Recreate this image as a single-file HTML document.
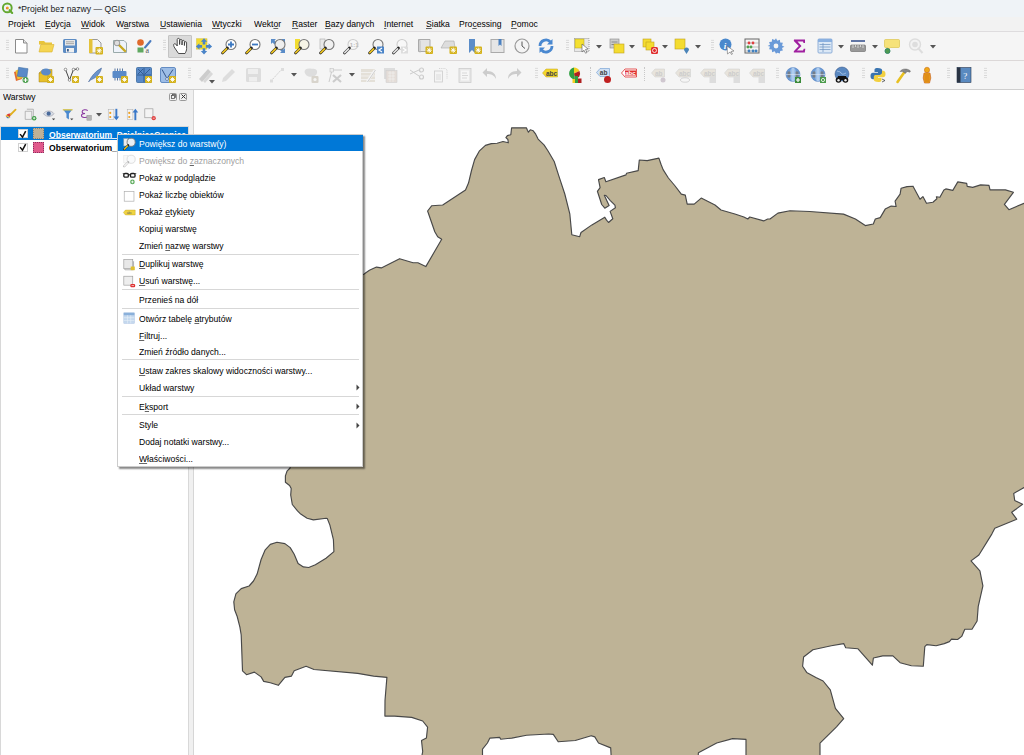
<!DOCTYPE html>
<html><head><meta charset="utf-8">
<style>
*{margin:0;padding:0;box-sizing:border-box}
html,body{width:1024px;height:755px;overflow:hidden;background:#fff;font-family:"Liberation Sans",sans-serif;font-size:8.6px;color:#000}
.abs{position:absolute}
.ic{position:absolute;overflow:visible}
.grip{position:absolute;width:3px;background-image:radial-gradient(circle,#d2d2d2 0.55px,transparent 0.75px);background-size:2px 2.4px}
.t{position:absolute;white-space:nowrap;line-height:10px;font-size:9.5px;transform:scaleX(.905);transform-origin:0 0}
.mb{top:19px;color:#000}
.mt{position:absolute;white-space:nowrap;line-height:10px;font-size:9.5px;transform:scaleX(.905);transform-origin:0 0}
u{text-decoration:underline;text-underline-offset:1px;text-decoration-thickness:0.8px;text-decoration-color:rgba(0,0,0,.6)}
</style></head><body>
<div class="abs" style="left:0;top:0;width:1024px;height:16.7px;background:#eff3f7"></div>
<svg class="ic" style="left:0;top:0;width:20px;height:18px" viewBox="0 0 20 18"><circle cx="7.3" cy="7.9" r="4.4" fill="none" stroke="#62a830" stroke-width="1.9"/><path d="M9.6 10.2L12.2 12.9" stroke="#62a830" stroke-width="2.1" stroke-linecap="round"/><circle cx="7.4" cy="8.1" r="1.5" fill="#f0b020"/><circle cx="6.9" cy="8.2" r="0.7" fill="#e05050"/></svg>
<div class="t" style="left:17.6px;top:3.6px;color:#1a1a1a">*Projekt bez nazwy — QGIS</div>
<div class="abs" style="left:0;top:16.7px;width:1024px;height:15.3px;background:#f2f2f2;border-bottom:1px solid #dedcde"></div>
<div class="t mb" style="left:7.5px">Pro<u>j</u>ekt</div>
<div class="t mb" style="left:45.4px"><u>E</u>dycja</div>
<div class="t mb" style="left:80.6px"><u>W</u>idok</div>
<div class="t mb" style="left:116.3px">W<u>a</u>rstwa</div>
<div class="t mb" style="left:159.75px"><u>U</u>stawienia</div>
<div class="t mb" style="left:211.9px"><u>W</u>tyczki</div>
<div class="t mb" style="left:253.7px">Wekt<u>o</u>r</div>
<div class="t mb" style="left:291.6px"><u>R</u>aster</div>
<div class="t mb" style="left:325.3px"><u>B</u>azy danych</div>
<div class="t mb" style="left:384px"><u>I</u>nternet</div>
<div class="t mb" style="left:425.5px"><u>S</u>iatka</div>
<div class="t mb" style="left:458.8px">Pro<u>c</u>essing</div>
<div class="t mb" style="left:511.2px"><u>P</u>omoc</div>
<div class="abs" style="left:0;top:32px;width:1024px;height:29px;background:#f5f5f5;border-bottom:1px solid #dcd8d8"></div>
<div class="abs" style="left:0;top:61px;width:1024px;height:28.5px;background:#f5f5f5;border-bottom:1px solid #cfcfcf"></div>
<div class="abs" style="left:0;top:89.5px;width:193px;height:666px;background:#f0f0f0"></div>
<div class="t" style="left:3.1px;top:91.9px">Warstwy</div>
<div class="abs" style="left:169px;top:92.7px;width:7.5px;height:8px;border:1px solid #999;border-radius:1.5px"></div>
<svg class="ic" style="left:170.5px;top:94.2px;width:5px;height:5px" viewBox="0 0 5 5"><rect x="1.5" y="0.5" width="3" height="3" fill="none" stroke="#555" stroke-width="0.8"/><rect x="0.5" y="1.5" width="3" height="3" fill="#f0f0f0" stroke="#555" stroke-width="0.8"/></svg>
<div class="abs" style="left:179.3px;top:92.7px;width:7.5px;height:8px;border:1px solid #999;border-radius:1.5px"></div>
<svg class="ic" style="left:180.8px;top:94.2px;width:5px;height:5px" viewBox="0 0 5 5"><path d="M0.5 0.5L4.5 4.5M4.5 0.5L0.5 4.5" stroke="#333" stroke-width="1"/></svg>
<div class="abs" style="left:0;top:126.2px;width:189px;height:630px;background:#fff;border:1px solid #d8d8d8"></div>
<div class="abs" style="left:1px;top:126.9px;width:187px;height:13.2px;background:#0078d7"></div>
<div class="abs" style="left:18px;top:129.3px;width:9.8px;height:9.2px;background:#fff;border:1px solid #d0d0d0"></div>
<svg class="ic" style="left:18px;top:129px;width:10px;height:10px" viewBox="0 0 10 10"><path d="M2.1 5.1L4.5 8.1L7.7 2.2" stroke="#111" stroke-width="1.5" fill="none" stroke-linejoin="miter"/></svg>
<div class="abs" style="left:32.7px;top:128.3px;width:11.3px;height:11.2px;background:#bdb197;border:1px dotted #8a8070"></div>
<div class="t" style="left:49px;top:130px;font-weight:bold;color:#fff;text-decoration:underline;text-decoration-color:rgba(255,255,255,.8);text-underline-offset:0px">Obserwatorium_DzielniceGranice</div>
<div class="abs" style="left:18px;top:142.5px;width:9.8px;height:9.7px;background:#fff;border:1px solid #d0d0d0"></div>
<svg class="ic" style="left:18px;top:142.3px;width:10px;height:10px" viewBox="0 0 10 10"><path d="M2.1 5.1L4.5 8.1L7.7 2.2" stroke="#111" stroke-width="1.5" fill="none" stroke-linejoin="miter"/></svg>
<div class="abs" style="left:32.7px;top:141.5px;width:11.3px;height:11.7px;background:#e05a8c;border:1px dotted #8a3060"></div>
<div class="t" style="left:49px;top:143.3px;font-weight:bold;color:#000">Obserwatorium_DzielniceGranice</div>
<div class="abs" style="left:189px;top:89.5px;width:4px;height:666px;background:#f0f0f0"></div>
<div class="abs" style="left:193px;top:89.5px;width:831px;height:666px;background:#fff;border-left:1px solid #d6d6d6"></div>
<svg style="position:absolute;left:193px;top:89.5px" width="831" height="666" viewBox="193 89.5 831 666">
<path d="M363.8 273.8 L369.4 269.8 L376.5 266.6 L381.3 267.4 L399.6 258.2 L413.1 262.2 L417.9 262.3 L425.8 266.1 L441.7 238.8 L437.7 236.2 L434.8 231.2 L427.6 210.5 L431.8 205.2 L442.7 204.5 L465.5 189.5 L468.5 182.6 L471.5 170 L474.6 159.1 L479.5 150.3 L485.4 144.9 L491.3 143.1 L497.1 142.7 L503 141 L508.3 142.3 L507.9 139 L505.9 137.1 L507.4 135.1 L510.8 134.2 L511.6 127.3 L526.4 127.3 L527.4 129.8 L528.4 131.7 L530.3 129.3 L533.2 130.3 L535.7 133.7 L538.1 138.6 L544 144.4 L547.9 150.3 L554.2 161 L558.9 175.6 L564.8 193.5 L569.8 213.3 L571.8 234.2 L579.7 236.2 L581 232 L591.9 224.4 L604.8 216.7 L606.4 219.4 L608.5 222 L612.8 218.3 L610.1 210.9 L615.4 207.2 L614.9 204.6 L610.1 199.8 L606 195 L604.3 194.8 L609.1 205.1 L604.8 207.7 L601.7 204 L597.4 190.8 L600.1 187.1 L598.5 179.1 L604.3 177 L605.9 181.3 L626 174.4 L626.5 172.8 L638.2 170.1 L639.3 159.5 L647.2 160.1 L658.9 157.6 L661 163.8 L663.1 169.1 L668.4 177.5 L674.7 185 L681.3 193.6 L685.3 194.6 L687.2 203.6 L694.2 203.6 L701.2 197.6 L715 204.5 L721 209.5 L734.9 213.5 L743.9 216.5 L747.8 218.5 L749.8 216.5 L763.7 220.4 L767.7 218.5 L770 218.5 L777.9 212.6 L789.9 210.2 L809.7 211 L843.5 213.6 L855.4 218.5 L865.3 225.1 L873.3 223.5 L875.3 218.5 L880.2 217.1 L885.2 208.6 L891.2 205.6 L896.1 206 L895.1 200.6 L900.1 193.7 L901.1 187.7 L907 186.1 L913 185.7 L920 198.7 L922.9 196.1 L926.5 202.8 L932.9 201.8 L936.9 198.3 L936.4 196.3 L939.9 196.8 L943.9 189.4 L945.8 188.4 L952.8 189.9 L957.8 181.4 L966.7 182.9 L967.2 185.9 L972.7 186.9 L980.6 184.4 L989 184.9 L990 189.4 L1005.4 189.4 L1013.4 191.8 L1004.4 203.8 L1008.9 209.2 L1024 202.8 L1040 200 L1040 490 L1024 487 L1013.7 492.9 L1014.7 499.9 L1022.6 503.8 L1011.7 511.8 L1016.7 518.7 L994.8 527.7 L991.8 533.6 L978.9 554.5 L971 560.4 L979.9 570.4 L982.9 585.3 L978.2 606.2 L977.1 620.5 L972 628.7 L964.8 628.7 L961.7 635.9 L957.6 639 L951.5 638.6 L949.4 641.1 L944.3 643.1 L936.1 645.2 L926.8 644.1 L924.8 646.2 L923.3 665.7 L911.4 665.3 L900.1 662.2 L892.9 655.4 L882.7 655.4 L873.4 657.5 L872.4 664.7 L858 648.3 L845.7 647.2 L843.7 643.1 L831.3 645.2 L812.9 649.3 L803.6 656.5 L802.6 665.7 L806.7 671.9 L815.9 677 L823.1 680.5 L830.3 689.3 L835.4 707.8 L843.7 718.1 L836.5 726.3 L820 742.7 L820 770 L746 770 L746 738.9 L732.6 738.1 L716.7 742.5 L698.4 752.3 L697.2 770 L611.9 770 L610.7 747.4 L598.5 742.5 L594.8 736.4 L591.2 735.2 L575.3 740 L558.2 741.3 L553.3 733.9 L548.5 733.5 L526.5 734.7 L511.8 737.6 L500.8 738.8 L499.6 736.9 L489.9 737.6 L487.4 742.5 L482.5 748.6 L482.5 770 L419 770 L422.7 751 L421.5 740 L426.4 737.6 L427.6 726.6 L422.7 720.5 L411.7 716.9 L394.6 715.6 L384.9 715.6 L385 700 L386.9 676.9 L373.6 675.6 L357.7 672.9 L314 669 L306.1 665.8 L294.2 670.3 L291.5 675.6 L284.9 676.9 L278.3 684.8 L270.3 682.2 L263.7 680.9 L261.1 676.4 L254.4 671.6 L246.5 674.2 L242.5 670.3 L241.2 634.5 L239.9 626.6 L237.2 616 L234.6 609.3 L233.8 601.4 L235.9 593.4 L241.2 588.1 L249.1 585.5 L253.5 580.5 L257.1 573.6 L261.1 559 L265 549.7 L270.3 543.9 L277 541.8 L284.9 543.1 L290.2 547.1 L294.2 553.7 L298.1 563 L303.4 566.4 L308.7 567 L315.4 564.3 L326 557.7 L333.9 551.1 L333.4 539.1 L329.9 524.6 L327.3 518 L326.2 517.8 L313.4 519.4 L307.1 517.8 L300.7 513.6 L297.5 510.4 L292.3 504 L290.7 494.5 L291.2 488.1 L289.6 485 L285.4 481.8 L285.4 475.4 L287 470.7 L290.1 467.5 L292 440 L300 300 L330 285 Z" fill="#beb396" stroke="#484848" stroke-width="1.15" stroke-linejoin="round"/>
</svg>
<div class="abs" style="left:168px;top:35px;width:24px;height:23px;background:#dadada;border:1px solid #c4c4c4;border-radius:1px"></div>
<svg class="ic" style="left:13px;top:37.5px;width:16px;height:16px" viewBox="0 0 16 16"><path d="M2.5 1.5h8l3.5 3.5v10h-11.5z" fill="#fff" stroke="#8a8a8a"/><path d="M10.5 1.5v3.5h3.5" fill="#e6e6e6" stroke="#8a8a8a"/></svg>
<svg class="ic" style="left:37.6px;top:37.5px;width:16px;height:16px" viewBox="0 0 16 16"><path d="M1 3h5l1.5 1.5h6.5v2h-13z" fill="#e8c43a"/><path d="M1 14l1.8-7.5h13.2l-2 7.5z" fill="#f5d552" stroke="#d9b12c" stroke-width="0.6"/></svg>
<svg class="ic" style="left:62.3px;top:37.5px;width:16px;height:16px" viewBox="0 0 16 16"><rect x="1" y="1" width="14" height="14" rx="1.5" fill="#5d8cc4"/><rect x="3" y="2" width="10" height="5.5" fill="#e8e8e8"/><path d="M4 3.8h8M4 5.6h8" stroke="#999" stroke-width="0.8"/><rect x="4" y="10" width="8" height="4.5" fill="#f0f0f0"/><rect x="5" y="11" width="1.8" height="2.5" fill="#3a5c8a"/></svg>
<svg class="ic" style="left:87px;top:37.5px;width:16px;height:16px" viewBox="0 0 16 16"><path d="M2.5 1.5h8l3.5 3.5v10h-11.5z" fill="#f4f4f4" stroke="#999"/><rect x="2" y="1" width="3.5" height="14" fill="#e4c23a"/><rect x="8.5" y="9" width="7.5" height="7.5" rx="1" fill="#d4b21c"/><path d="M12.25 10.2v5.1M9.7 12.75h5.1M10.3 10.8l3.9 3.9M14.2 10.8l-3.9 3.9" stroke="#fff" stroke-width="0.9"/></svg>
<svg class="ic" style="left:112px;top:37.5px;width:16px;height:16px" viewBox="0 0 16 16"><path d="M1.5 2.5h10.5l2.5 2.5v9.5h-13z" fill="#eef3fa" stroke="#9aa"/><path d="M5 5l8 8" stroke="#c8a820" stroke-width="2.4" stroke-linecap="round"/><circle cx="5" cy="5" r="2.8" fill="#ddd" stroke="#888" stroke-width="0.8"/></svg>
<svg class="ic" style="left:135.5px;top:37.5px;width:16px;height:16px" viewBox="0 0 16 16"><circle cx="4.5" cy="4.5" r="3.3" fill="#e06a2c"/><path d="M9 9.5 L14.5 3" stroke="#4a7cc0" stroke-width="2" stroke-linecap="round"/><rect x="1.5" y="9.5" width="6" height="5" fill="#5fa860"/><text x="9.5" y="15" font-size="8" fill="#555" font-family="Liberation Serif">a</text></svg>
<svg class="ic" style="left:172px;top:37.5px;width:16px;height:16px" viewBox="0 0 16 16"><path d="M6.5 15.5L2.8 10C1.8 8.5 1 6.5 2.3 5.8C3.2 5.3 4.2 6.3 5.2 8L5.2 1.5C5.2 0 7.6 0 7.6 1.5L7.6 6.5L7.8 2.5C7.8 1 10 1 10 2.5L10 7L10.2 3.5C10.2 2 12.4 2 12.4 3.5L12.4 7.5L12.6 4.7C12.6 3.3 14.6 3.3 14.6 4.7L14.6 10.5C14.6 12.5 13.8 14 13 15.5Z" fill="#fff" stroke="#3a3a3a" stroke-width="0.9" stroke-linejoin="round"/></svg>
<svg class="ic" style="left:196px;top:37.5px;width:16px;height:16px" viewBox="0 0 16 16"><rect x="0.7" y="0.8" width="10.3" height="10.3" fill="#f2dc30" stroke="#d0b820" stroke-width="0.5"/><g fill="#4a84c8"><path d="M8 0.3L11.2 3.8H9.3V6.5H6.7V3.8H4.8Z"/><path d="M8 0.3L11.2 3.8H9.3V6.5H6.7V3.8H4.8Z" transform="rotate(90 8 8.4)"/><path d="M8 0.3L11.2 3.8H9.3V6.5H6.7V3.8H4.8Z" transform="rotate(180 8 8.4)"/><path d="M8 0.3L11.2 3.8H9.3V6.5H6.7V3.8H4.8Z" transform="rotate(270 8 8.4)"/></g></svg>
<svg class="ic" style="left:220.5px;top:37.5px;width:16px;height:16px" viewBox="0 0 16 16"><circle cx="10" cy="6.5" r="5" fill="#fff" stroke="#777" stroke-width="1.1"/><path d="M6.5 10 L1.5 15" stroke="#222" stroke-width="2.6" stroke-linecap="round"/><path d="M5.5 11 L1.8 14.7" stroke="#e8c020" stroke-width="1.8" stroke-linecap="round"/><path d="M7 6.5h6M10 3.5v6" stroke="#3c78c0" stroke-width="1.8"/></svg>
<svg class="ic" style="left:244.5px;top:37.5px;width:16px;height:16px" viewBox="0 0 16 16"><circle cx="10" cy="6.5" r="5" fill="#fff" stroke="#777" stroke-width="1.1"/><path d="M6.5 10 L1.5 15" stroke="#222" stroke-width="2.6" stroke-linecap="round"/><path d="M5.5 11 L1.8 14.7" stroke="#e8c020" stroke-width="1.8" stroke-linecap="round"/><path d="M7 6.5h6" stroke="#3c78c0" stroke-width="1.8"/></svg>
<svg class="ic" style="left:269.5px;top:37.5px;width:16px;height:16px" viewBox="0 0 16 16"><path d="M1 1h5l-1.5 1.5 2 2-2 2-2-2L1 6zM15 1v5l-1.5-1.5-2 2-2-2 2-2L10 1zM15 15h-5l1.5-1.5-2-2 2-2 2 2L15 10z" fill="#5a8cc8"/><circle cx="10" cy="6.5" r="5" fill="#eee" stroke="#777" stroke-width="1.1"/><path d="M6.5 10 L1.5 15" stroke="#222" stroke-width="2.6" stroke-linecap="round"/><path d="M5.5 11 L1.8 14.7" stroke="#e8c020" stroke-width="1.8" stroke-linecap="round"/></svg>
<svg class="ic" style="left:294px;top:37.5px;width:16px;height:16px" viewBox="0 0 16 16"><rect x="1" y="1" width="5" height="10" fill="#f2dc30"/><circle cx="10" cy="6.5" r="5" fill="#f6f4e6" stroke="#777" stroke-width="1.1"/><path d="M6.5 10 L1.5 15" stroke="#222" stroke-width="2.6" stroke-linecap="round"/><path d="M5.5 11 L1.8 14.7" stroke="#e8c020" stroke-width="1.8" stroke-linecap="round"/></svg>
<svg class="ic" style="left:318.5px;top:37.5px;width:16px;height:16px" viewBox="0 0 16 16"><rect x="1" y="1" width="5" height="10" fill="#e8e8e8" stroke="#aaa" stroke-width="0.6"/><circle cx="10" cy="6.5" r="5" fill="#f0f0f0" stroke="#777" stroke-width="1.1"/><path d="M6.5 10 L1.5 15" stroke="#222" stroke-width="2.6" stroke-linecap="round"/><path d="M5.5 11 L1.8 14.7" stroke="#e8c020" stroke-width="1.8" stroke-linecap="round"/></svg>
<svg class="ic" style="left:342.5px;top:37.5px;width:16px;height:16px" viewBox="0 0 16 16"><circle cx="10" cy="6.5" r="5" fill="#f6f6f6" stroke="#ccc" stroke-width="1.1"/><path d="M6.5 10 L1.5 15" stroke="#222" stroke-width="2.6" stroke-linecap="round"/><path d="M5.5 11 L1.8 14.7" stroke="#ddd" stroke-width="1.8" stroke-linecap="round"/><text x="6.8" y="9" font-size="6" fill="#bbb" font-family="Liberation Sans" font-weight="bold">1:1</text></svg>
<svg class="ic" style="left:367.5px;top:37.5px;width:16px;height:16px" viewBox="0 0 16 16"><circle cx="10" cy="6.5" r="5" fill="#f4f4f4" stroke="#777" stroke-width="1.1"/><path d="M6.5 10 L1.5 15" stroke="#222" stroke-width="2.6" stroke-linecap="round"/><path d="M5.5 11 L1.8 14.7" stroke="#e8c020" stroke-width="1.8" stroke-linecap="round"/><rect x="9" y="8.5" width="7" height="7" fill="#4a84c8"/><path d="M14 10l-3 2 3 2" stroke="#fff" stroke-width="1.2" fill="none"/></svg>
<svg class="ic" style="left:391.5px;top:37.5px;width:16px;height:16px" viewBox="0 0 16 16"><circle cx="10" cy="6.5" r="5" fill="#f8f8f8" stroke="#ccc" stroke-width="1.1"/><path d="M6.5 10 L1.5 15" stroke="#222" stroke-width="2.6" stroke-linecap="round"/><path d="M5.5 11 L1.8 14.7" stroke="#ddd" stroke-width="1.8" stroke-linecap="round"/><rect x="9" y="8.5" width="7" height="7" fill="#ddd"/><path d="M11 10l3 2-3 2" stroke="#fff" stroke-width="1.2" fill="none"/></svg>
<svg class="ic" style="left:416.5px;top:37.5px;width:16px;height:16px" viewBox="0 0 16 16"><path d="M1.5 1.5h11.5v12h-11.5z" fill="#e4e4e4" stroke="#aaa"/><path d="M1.5 1.5l1.5 1v12" stroke="#bbb" fill="none"/><rect x="8.5" y="8.5" width="7.5" height="7.5" rx="1" fill="#d4b21c"/><path d="M12.25 9.7v5.1M9.7 12.25h5.1M10.3 10.3l3.9 3.9M14.2 10.3l-3.9 3.9" stroke="#fff" stroke-width="0.9"/></svg>
<svg class="ic" style="left:440.5px;top:37.5px;width:16px;height:16px" viewBox="0 0 16 16"><path d="M4 3h9l1 7h-14z" fill="#ddd" stroke="#aaa" stroke-width="0.6"/><rect x="8.5" y="8.5" width="7.5" height="7.5" rx="1" fill="#d4b21c"/><path d="M12.25 9.7v5.1M9.7 12.25h5.1M10.3 10.3l3.9 3.9M14.2 10.3l-3.9 3.9" stroke="#fff" stroke-width="0.9"/></svg>
<svg class="ic" style="left:466px;top:37.5px;width:16px;height:16px" viewBox="0 0 16 16"><path d="M3 1h6v14l-3-3-3 3z" fill="#5a8cc8"/><rect x="8.5" y="8.5" width="7.5" height="7.5" rx="1" fill="#d4b21c"/><path d="M12.25 9.7v5.1M9.7 12.25h5.1M10.3 10.3l3.9 3.9M14.2 10.3l-3.9 3.9" stroke="#fff" stroke-width="0.9"/></svg>
<svg class="ic" style="left:490px;top:37.5px;width:16px;height:16px" viewBox="0 0 16 16"><rect x="1" y="1.5" width="13" height="13" fill="#e6e6e6" stroke="#aaa"/><path d="M8.5 1v7l1.5-1.5 1.5 1.5v-7z" fill="#4a80c0"/></svg>
<svg class="ic" style="left:513.5px;top:37.5px;width:16px;height:16px" viewBox="0 0 16 16"><circle cx="8" cy="8" r="7" fill="#f4f4f4" stroke="#999" stroke-width="1.2"/><path d="M8 3.5v4.5l3 2.5" stroke="#555" stroke-width="1" fill="none"/></svg>
<svg class="ic" style="left:538px;top:37.5px;width:16px;height:16px" viewBox="0 0 16 16"><path d="M2 8a6 6 0 0 1 10.5-4" stroke="#4a88d0" stroke-width="2.8" fill="none"/><path d="M14.5 1v5.5h-5.5z" fill="#4a88d0"/><path d="M14 8a6 6 0 0 1-10.5 4" stroke="#4a88d0" stroke-width="2.8" fill="none"/><path d="M1.5 15v-5.5h5.5z" fill="#4a88d0"/></svg>
<svg class="ic" style="left:574px;top:37.5px;width:16px;height:16px" viewBox="0 0 16 16"><rect x="0.5" y="0.5" width="14.5" height="13" fill="#e8e8e8" stroke="#777" stroke-width="0.7" stroke-dasharray="1,1"/><rect x="1" y="1" width="9" height="9" fill="#f4e030" stroke="#b0a020" stroke-width="0.5"/><path d="M8 6l6 5-2.5.5 1.5 3-1.5.7-1.5-3L8 14z" fill="#fff" stroke="#555" stroke-width="0.6"/></svg>
<svg class="ic" style="left:608.5px;top:37.5px;width:16px;height:16px" viewBox="0 0 16 16"><rect x="1" y="1" width="9" height="9" fill="#ccc" stroke="#888" stroke-width="0.6"/><path d="M2.5 4h6M2.5 6.5h6" stroke="#888"/><rect x="5" y="6" width="10" height="9" fill="#f4dc30" stroke="#c0a020" stroke-width="0.6"/></svg>
<svg class="ic" style="left:641.5px;top:37.5px;width:16px;height:16px" viewBox="0 0 16 16"><rect x="1" y="1" width="8" height="8" fill="#f4dc30" stroke="#c0a020" stroke-width="0.6"/><rect x="4" y="4" width="8" height="8" fill="#f4dc30" stroke="#c0a020" stroke-width="0.6"/><rect x="9" y="9" width="7" height="7" rx="1.5" fill="#e03030"/><circle cx="12.5" cy="12.5" r="2" stroke="#fff" fill="none" stroke-width="0.8"/></svg>
<svg class="ic" style="left:674px;top:37.5px;width:16px;height:16px" viewBox="0 0 16 16"><rect x="1" y="1" width="10" height="10" fill="#f4dc30" stroke="#c0a020" stroke-width="0.6"/><path d="M12.5 16l-2.5-4a2.5 2.5 0 1 1 5 0z" fill="#4a84b8"/></svg>
<svg class="ic" style="left:719px;top:37.5px;width:16px;height:16px" viewBox="0 0 16 16"><circle cx="6.5" cy="6.5" r="6" fill="#4a88cc"/><text x="4.8" y="10.5" font-size="9" fill="#fff" font-family="Liberation Serif" font-style="italic" font-weight="bold">i</text><path d="M8 8l7 5-3 .5 1.5 2.5-1 .5-1.5-2.5-2.5 2z" fill="#fff" stroke="#666" stroke-width="0.6"/></svg>
<svg class="ic" style="left:743.5px;top:37.5px;width:16px;height:16px" viewBox="0 0 16 16"><rect x="1" y="1" width="14" height="14" fill="none" stroke="#666" stroke-width="1"/><path d="M1 5h14M1 9h14M1 13h14" stroke="#888" stroke-width="0.5"/><circle cx="5" cy="5" r="1.4" fill="#e04040"/><circle cx="9" cy="5" r="1.4" fill="#e04040"/><circle cx="4" cy="9" r="1.4" fill="#50a050"/><circle cx="7" cy="9" r="1.4" fill="#50a050"/><circle cx="5" cy="13" r="1.4" fill="#4080c0"/><circle cx="9" cy="13" r="1.4" fill="#4080c0"/><circle cx="12" cy="13" r="1.4" fill="#4080c0"/></svg>
<svg class="ic" style="left:768px;top:37.5px;width:16px;height:16px" viewBox="0 0 16 16"><path d="M8 0.3l1.3 2.4 2.6-.9.3 2.7 2.7.3-.9 2.6 2.4 1.3-2.4 1.3.9 2.6-2.7.3-.3 2.7-2.6-.9L8 15.7l-1.3-2.4-2.6.9-.3-2.7-2.7-.3.9-2.6L-.4 8l2.4-1.3-.9-2.6 2.7-.3.3-2.7 2.6.9z" fill="#6a9ad8"/><circle cx="8" cy="8" r="2.4" fill="#f4f4f4"/></svg>
<svg class="ic" style="left:792px;top:37.5px;width:16px;height:16px" viewBox="0 0 16 16"><path d="M2 1.5h11v3.5h-1.5l-.5-1.5h-5.5l4 4.5-4.5 4.5h6l.8-1.8h1.5l-.5 3.8h-11v-1.2l5-5.2-5-5.2z" fill="#a020a0"/></svg>
<svg class="ic" style="left:817px;top:37.5px;width:16px;height:16px" viewBox="0 0 16 16"><rect x="1" y="1" width="14" height="14" rx="1" fill="#dbe8f6" stroke="#7aa0d0" stroke-width="0.8"/><rect x="1" y="1" width="14" height="3" fill="#8ab0e0"/><path d="M2.5 6.5h11M2.5 9h11M2.5 11.5h11M6 5v9" stroke="#6a90c0" stroke-width="0.7"/></svg>
<svg class="ic" style="left:850px;top:37.5px;width:16px;height:16px" viewBox="0 0 16 16"><path d="M1 3h14" stroke="#223e80" stroke-width="1.4"/><rect x="0.5" y="7" width="15" height="6.5" rx="1" fill="#999" stroke="#666" stroke-width="0.6"/><path d="M3 7v3M5.5 7v2M8 7v3M10.5 7v2M13 7v3" stroke="#eee" stroke-width="0.7"/></svg>
<svg class="ic" style="left:883.5px;top:37.5px;width:16px;height:16px" viewBox="0 0 16 16"><path d="M1.5 1.5h13a1 1 0 0 1 1 1v6a1 1 0 0 1-1 1h-8l-3 3v-3h-2a1 1 0 0 1-1-1v-6a1 1 0 0 1 1-1z" fill="#f6e27a" stroke="#d8c040" stroke-width="0.6"/><circle cx="3.5" cy="13" r="2.5" fill="#4e9a50" stroke="#386"/></svg>
<svg class="ic" style="left:907.5px;top:37.5px;width:16px;height:16px" viewBox="0 0 16 16"><circle cx="7" cy="6.5" r="5.5" fill="#f2f2f2" stroke="#ddd" stroke-width="1.4"/><circle cx="7" cy="6.5" r="2.8" fill="#ddd"/><path d="M10 10l4.5 5" stroke="#ddd" stroke-width="2"/></svg>
<svg class="ic" style="left:595.5px;top:44.5px;width:6px;height:4px" viewBox="0 0 6 4"><path d="M0 0h6l-3 3.5z" fill="#555"/></svg>
<svg class="ic" style="left:628.5px;top:44.5px;width:6px;height:4px" viewBox="0 0 6 4"><path d="M0 0h6l-3 3.5z" fill="#555"/></svg>
<svg class="ic" style="left:662px;top:44.5px;width:6px;height:4px" viewBox="0 0 6 4"><path d="M0 0h6l-3 3.5z" fill="#555"/></svg>
<svg class="ic" style="left:695px;top:44.5px;width:6px;height:4px" viewBox="0 0 6 4"><path d="M0 0h6l-3 3.5z" fill="#555"/></svg>
<svg class="ic" style="left:838.4px;top:44.5px;width:6px;height:4px" viewBox="0 0 6 4"><path d="M0 0h6l-3 3.5z" fill="#555"/></svg>
<svg class="ic" style="left:871.5px;top:44.5px;width:6px;height:4px" viewBox="0 0 6 4"><path d="M0 0h6l-3 3.5z" fill="#555"/></svg>
<svg class="ic" style="left:929.5px;top:44.5px;width:6px;height:4px" viewBox="0 0 6 4"><path d="M0 0h6l-3 3.5z" fill="#555"/></svg>
<div class="grip" style="left:5.6px;top:39px;height:12px"></div>
<div class="grip" style="left:163px;top:39px;height:12px"></div>
<div class="grip" style="left:566px;top:39px;height:12px"></div>
<div class="grip" style="left:711px;top:39px;height:12px"></div>
<svg class="ic" style="left:13px;top:66.5px;width:16px;height:16px" viewBox="0 0 16 16"><path d="M1 5l6-2 2 9-6 2z" fill="#e06a30"/><path d="M2.5 3.5l6-2 2 9-6 2z" fill="#f0c030"/><rect x="5" y="1" width="9.5" height="9" fill="#5a8ac8" stroke="#3a6aa0" stroke-width="0.5" transform="rotate(8 10 5)"/><circle cx="12.5" cy="13" r="3" fill="#4ea050"/><path d="M12.5 11v4M10.5 13h4" stroke="#fff" stroke-width="1"/></svg>
<svg class="ic" style="left:38px;top:66.5px;width:16px;height:16px" viewBox="0 0 16 16"><path d="M1 6l4-3.5h9v9l-4 3.5h-9z" fill="#e8c02a" stroke="#a08020" stroke-width="0.5"/><path d="M1 6h9v9" fill="none" stroke="#a08020" stroke-width="0.5"/><ellipse cx="8" cy="5" rx="5" ry="3.5" fill="#5a8ac8"/><rect x="9" y="9" width="7" height="7" rx="1" fill="#d4b21c"/><path d="M12.5 10.2v4.6M10.2 12.5h4.6M10.8 10.8l3.4 3.4M14.2 10.8l-3.4 3.4" stroke="#fff" stroke-width="0.9"/></svg>
<svg class="ic" style="left:62.5px;top:66.5px;width:16px;height:16px" viewBox="0 0 16 16"><path d="M2.5 2.5L6.5 13 10.5 2.5 14.5 2" stroke="#444" stroke-width="1" fill="none"/><circle cx="2.5" cy="2.5" r="1.3" fill="#fff" stroke="#555" stroke-width="0.6"/><circle cx="6.5" cy="13" r="1.3" fill="#fff" stroke="#555" stroke-width="0.6"/><circle cx="10.5" cy="2.5" r="1.3" fill="#fff" stroke="#555" stroke-width="0.6"/><circle cx="14.5" cy="2" r="1.3" fill="#fff" stroke="#555" stroke-width="0.6"/><rect x="9" y="9" width="7" height="7" rx="1" fill="#d4b21c"/><path d="M12.5 10.2v4.6M10.2 12.5h4.6M10.8 10.8l3.4 3.4M14.2 10.8l-3.4 3.4" stroke="#fff" stroke-width="0.9"/></svg>
<svg class="ic" style="left:87px;top:66.5px;width:16px;height:16px" viewBox="0 0 16 16"><path d="M1.5 15c3-6 7-11 13-14-1 5-5 10-11 12z" fill="#6a94cc" stroke="#3a5a90" stroke-width="0.5"/><rect x="9" y="9" width="7" height="7" rx="1" fill="#d4b21c"/><path d="M12.5 10.2v4.6M10.2 12.5h4.6M10.8 10.8l3.4 3.4M14.2 10.8l-3.4 3.4" stroke="#fff" stroke-width="0.9"/></svg>
<svg class="ic" style="left:112px;top:66.5px;width:16px;height:16px" viewBox="0 0 16 16"><rect x="0.5" y="4" width="14" height="7" rx="1" fill="#5a8ac8"/><path d="M3 1.5v2.5M5.5 1.5v2.5M8 1.5v2.5M10.5 1.5v2.5M3 11v2.5M5.5 11v2.5M8 11v2.5" stroke="#4a6a98" stroke-width="0.9"/><rect x="9" y="9" width="7" height="7" rx="1" fill="#d4b21c"/><path d="M12.5 10.2v4.6M10.2 12.5h4.6M10.8 10.8l3.4 3.4M14.2 10.8l-3.4 3.4" stroke="#fff" stroke-width="0.9"/></svg>
<svg class="ic" style="left:136px;top:66.5px;width:16px;height:16px" viewBox="0 0 16 16"><rect x="0.5" y="0.5" width="15" height="15" rx="1" fill="#5a8ac8" stroke="#3a6aa0" stroke-width="0.8"/><path d="M8 1v14M1 8h14M2 2l5 5M7 2l-5 5M14 2l-5 5" stroke="#244a80" stroke-width="0.7"/><rect x="9" y="9" width="7" height="7" rx="1" fill="#d4b21c"/><path d="M12.5 10.2v4.6M10.2 12.5h4.6M10.8 10.8l3.4 3.4M14.2 10.8l-3.4 3.4" stroke="#fff" stroke-width="0.9"/></svg>
<svg class="ic" style="left:160px;top:66.5px;width:16px;height:16px" viewBox="0 0 16 16"><rect x="0.5" y="0.5" width="15" height="15" rx="1.5" fill="#9dbde6" stroke="#4a78b8" stroke-width="0.8"/><path d="M2 2.5L7 11.5 13 2.5" stroke="#2a4a80" stroke-width="0.9" fill="none"/><circle cx="7" cy="12" r="1.4" fill="#fff" stroke="#2a4a80" stroke-width="0.6"/><rect x="9" y="9" width="7" height="7" rx="1" fill="#d4b21c"/><path d="M12.5 10.2v4.6M10.2 12.5h4.6M10.8 10.8l3.4 3.4M14.2 10.8l-3.4 3.4" stroke="#fff" stroke-width="0.9"/></svg>
<svg class="ic" style="left:198px;top:66.5px;width:16px;height:16px" viewBox="0 0 16 16"><path d="M1 12L10 2l3 3-9 10z" fill="#ccc"/><path d="M5 14L13 5l2 2-8 9z" fill="#d8d8d8"/></svg>
<svg class="ic" style="left:220px;top:66.5px;width:16px;height:16px" viewBox="0 0 16 16"><path d="M2 15l1-4 9-9 3 3-9 9z" fill="#ddd"/></svg>
<svg class="ic" style="left:245px;top:66.5px;width:16px;height:16px" viewBox="0 0 16 16"><rect x="1" y="1" width="15" height="14" rx="1.5" fill="#ddd"/><rect x="3" y="2" width="10" height="5" fill="#eee"/><rect x="4" y="10" width="8" height="4.5" fill="#eee"/></svg>
<svg class="ic" style="left:269px;top:66.5px;width:16px;height:16px" viewBox="0 0 16 16"><path d="M2 14L13 2" stroke="#ccc" stroke-width="1" stroke-dasharray="1.5,1"/><rect x="1" y="12.5" width="3" height="3" fill="#ddd"/><rect x="12" y="1" width="3" height="3" fill="#ddd"/></svg>
<svg class="ic" style="left:303px;top:66.5px;width:16px;height:16px" viewBox="0 0 16 16"><path d="M1.5 5c0-3 3-4 6-3.5s6 0 6.5 2.5-1 5-4 5.5-7 .5-8.5-4.5z" fill="#ddd"/><rect x="8.5" y="9" width="7" height="7" rx="1" fill="#d8d4cc"/><circle cx="12" cy="12.5" r="1.6" fill="#f4f4f4"/></svg>
<svg class="ic" style="left:327px;top:66.5px;width:16px;height:16px" viewBox="0 0 16 16"><path d="M2 15L5 3h10" stroke="#ccc" stroke-width="1" fill="none"/><rect x="3" y="1.5" width="3.5" height="3.5" fill="#eee" stroke="#bbb" stroke-width="0.5"/><path d="M6 8l8 7M14 8l-8 7" stroke="#ccc" stroke-width="2.2"/></svg>
<svg class="ic" style="left:360px;top:66.5px;width:16px;height:16px" viewBox="0 0 16 16"><rect x="1" y="2" width="14" height="13" fill="#e4e0d8"/><path d="M1 5.5h14M1 9h14M1 12.5h14" stroke="#f4f4f4" stroke-width="0.8"/><path d="M7 15L15 3" stroke="#f4f4f4" stroke-width="2.4"/><path d="M7.5 15L15.5 3" stroke="#d0d0d0" stroke-width="1"/></svg>
<svg class="ic" style="left:383px;top:66.5px;width:16px;height:16px" viewBox="0 0 16 16"><rect x="1" y="1" width="11" height="11" fill="#ddd"/><rect x="3" y="3.5" width="11" height="12" fill="#e4ddd8" stroke="#ccc" stroke-width="0.5"/><path d="M5 6h7M5 9h7M5 12h7M7 4v11M10 4v11" stroke="#f4f4f4" stroke-width="0.5"/></svg>
<svg class="ic" style="left:409px;top:66.5px;width:16px;height:16px" viewBox="0 0 16 16"><path d="M1 3l9 6M1 7l9-4" stroke="#ccc" stroke-width="1"/><circle cx="12.5" cy="3" r="2" fill="none" stroke="#ccc" stroke-width="1.2"/><circle cx="12.5" cy="10" r="2" fill="none" stroke="#ccc" stroke-width="1.2"/></svg>
<svg class="ic" style="left:433px;top:66.5px;width:16px;height:16px" viewBox="0 0 16 16"><rect x="1.5" y="4" width="8" height="11" fill="#f4f4f4" stroke="#ccc" stroke-width="0.8"/><path d="M6 1.5h6.5l1.5 1.5v9" fill="none" stroke="#ccc" stroke-width="0.8" stroke-dasharray="1,0.8"/><path d="M3 8h5M3 10h5M3 12h5" stroke="#ccc" stroke-width="0.6"/></svg>
<svg class="ic" style="left:458px;top:66.5px;width:16px;height:16px" viewBox="0 0 16 16"><rect x="1" y="1.5" width="12" height="14" fill="#e8e8e8" stroke="#ccc" stroke-width="0.8"/><rect x="3" y="3.5" width="8" height="10" fill="#f6f6f6"/><path d="M4 6h5M4 8.5h6M4 11h5" stroke="#ccc" stroke-width="0.7"/></svg>
<svg class="ic" style="left:482px;top:66.5px;width:16px;height:16px" viewBox="0 0 16 16"><path d="M5 1L0.5 5.5 5 10V7c4 0 7 1 9 5 0-5-3-8-9-8z" fill="#ccc"/></svg>
<svg class="ic" style="left:506px;top:66.5px;width:16px;height:16px" viewBox="0 0 16 16"><path d="M11 1l4.5 4.5L11 10V7c-4 0-7 1-9 5 0-5 3-8 9-8z" fill="#ccc"/></svg>
<svg class="ic" style="left:542px;top:66.5px;width:16px;height:16px" viewBox="0 0 16 16"><path d="M0.5 6l3.5-4h11.5v8h-11.5z" fill="#f4d82a" stroke="#c0a020" stroke-width="0.5"/><text x="4" y="8.8" font-size="6.5" font-weight="bold" fill="#444" font-family="Liberation Sans">abc</text></svg>
<svg class="ic" style="left:567.5px;top:66.5px;width:16px;height:16px" viewBox="0 0 16 16"><path d="M6 6.5L6 0.5A6 6 0 0 1 11.5 4z" fill="#f4d020"/><path d="M6 6.5L11.5 4A6 6 0 0 1 7 12.4z" fill="#b02020"/><path d="M6 6.5L7 12.4A6 6 0 0 1 6 0.5z" fill="#30a040"/><rect x="7" y="9" width="3" height="7" fill="#30a040"/><rect x="4.5" y="12" width="2.5" height="4" fill="#f4d020"/><rect x="10" y="11.5" width="3.5" height="4.5" fill="#b02020"/></svg>
<svg class="ic" style="left:596px;top:66.5px;width:16px;height:16px" viewBox="0 0 16 16"><path d="M0.5 5.5l3.5-4h9.5v8h-9.5z" fill="#cfe0f4" stroke="#6a98d0" stroke-width="0.6"/><text x="3.8" y="8.2" font-size="6.5" font-weight="bold" fill="#444" font-family="Liberation Sans">ab</text><circle cx="11.5" cy="12.5" r="3.5" fill="#c02020"/></svg>
<svg class="ic" style="left:620.5px;top:66.5px;width:16px;height:16px" viewBox="0 0 16 16"><path d="M0.5 6l3.5-4h11.5v8h-11.5z" fill="#fff" stroke="#e03030" stroke-width="0.8"/><rect x="4" y="3.5" width="11" height="5" fill="#e03030"/><text x="4.2" y="8.3" font-size="6" font-weight="bold" fill="#fff" font-family="Liberation Sans">abc</text></svg>
<svg class="ic" style="left:651px;top:66.5px;width:16px;height:16px" viewBox="0 0 16 16"><path d="M0.5 6l3.5-4h9.5v8h-9.5z" fill="#e8e4dc" stroke="#ccc" stroke-width="0.5"/><text x="4" y="8.5" font-size="6.5" font-weight="bold" fill="#ccc" font-family="Liberation Sans">ab</text><circle cx="12" cy="13" r="2.5" fill="#d0c8d0"/></svg>
<svg class="ic" style="left:675px;top:66.5px;width:16px;height:16px" viewBox="0 0 16 16"><path d="M0.5 6l3.5-4h11.5v8h-11.5z" fill="#e8e4dc" stroke="#ccc" stroke-width="0.5"/><text x="4" y="8.5" font-size="6.5" font-weight="bold" fill="#ccc" font-family="Liberation Sans">abc</text><ellipse cx="10" cy="13" rx="4.5" ry="2.2" fill="none" stroke="#ccc" stroke-width="0.8"/></svg>
<svg class="ic" style="left:699.5px;top:66.5px;width:16px;height:16px" viewBox="0 0 16 16"><path d="M0.5 6l3.5-4h11.5v8h-11.5z" fill="#e8e4dc" stroke="#ccc" stroke-width="0.5"/><text x="4" y="8.5" font-size="6.5" font-weight="bold" fill="#ccc" font-family="Liberation Sans">abc</text><rect x="9.5" y="9.5" width="6.5" height="6.5" fill="#ddd"/></svg>
<svg class="ic" style="left:724px;top:66.5px;width:16px;height:16px" viewBox="0 0 16 16"><path d="M0.5 6l3.5-4h11.5v8h-11.5z" fill="#e8e4dc" stroke="#ccc" stroke-width="0.5"/><text x="4" y="8.5" font-size="6.5" font-weight="bold" fill="#ccc" font-family="Liberation Sans">abc</text><rect x="9.5" y="9.5" width="6.5" height="6.5" fill="#ddd"/></svg>
<svg class="ic" style="left:749px;top:66.5px;width:16px;height:16px" viewBox="0 0 16 16"><path d="M0.5 6l3.5-4h11.5v8h-11.5z" fill="#e8e4dc" stroke="#ccc" stroke-width="0.5"/><text x="4" y="8.5" font-size="6.5" font-weight="bold" fill="#ccc" font-family="Liberation Sans">abc</text><rect x="9.5" y="9.5" width="6.5" height="6.5" fill="#ddd"/></svg>
<svg class="ic" style="left:785px;top:66.5px;width:16px;height:16px" viewBox="0 0 16 16"><circle cx="8" cy="7.5" r="7" fill="#6a9ad6" stroke="#4a78b8" stroke-width="0.5"/><ellipse cx="8" cy="7.5" rx="3.2" ry="7" fill="#9cc0ea"/><path d="M2.5 4.5h3v6h-3zM10.5 4.5h3v6h-3z" fill="#777" opacity="0.8"/><path d="M8 .5v14M1 7.5h14" stroke="#dde8f6" stroke-width="0.6"/><rect x="10" y="10" width="6" height="6" fill="#3a8a3a"/><path d="M13 11v4M11 13h4" stroke="#fff" stroke-width="1.2"/></svg>
<svg class="ic" style="left:810px;top:66.5px;width:16px;height:16px" viewBox="0 0 16 16"><circle cx="8" cy="7.5" r="7" fill="#6a9ad6" stroke="#4a78b8" stroke-width="0.5"/><ellipse cx="8" cy="7.5" rx="3.2" ry="7" fill="#9cc0ea"/><path d="M2.5 4.5h3v6h-3zM10.5 4.5h3v6h-3z" fill="#777" opacity="0.8"/><path d="M8 .5v14M1 7.5h14" stroke="#dde8f6" stroke-width="0.6"/><rect x="10" y="10" width="6" height="6" fill="#4a9a4a"/><circle cx="13" cy="13" r="1.6" fill="none" stroke="#fff" stroke-width="0.8"/></svg>
<svg class="ic" style="left:834px;top:66.5px;width:16px;height:16px" viewBox="0 0 16 16"><circle cx="8" cy="7" r="7" fill="#5a88c0" stroke="#2a4a80" stroke-width="0.5"/><path d="M3 4c2 1 3 0 4 2s3 1 5 0M4 10c2-1 4 0 8-1" stroke="#bcd4f0" stroke-width="0.7" fill="none"/><circle cx="4.5" cy="13" r="2.8" fill="#111"/><circle cx="11.5" cy="13" r="2.8" fill="#111"/><path d="M4 9h8l1 4H3z" fill="#111"/><circle cx="4.5" cy="13.3" r="1.2" fill="#eee"/><circle cx="11.5" cy="13.3" r="1.2" fill="#eee"/></svg>
<svg class="ic" style="left:870px;top:66.5px;width:16px;height:16px" viewBox="0 0 16 16"><path d="M7.5 1c-3 0-3 1.3-3 2.5V5h3.5v.7H3c-1.5 0-2.5 1-2.5 3.3s1 3.3 2.5 3.3h1V10.5c0-1.5 1-2.5 2.5-2.5h3.5c1.3 0 2.2-.9 2.2-2.2V3.5C12.2 2 11 1 7.5 1z" fill="#3a74b0"/><path d="M8.5 15c3 0 3-1.3 3-2.5V11H8v-.7h5c1.5 0 2.5-1 2.5-3.3s-1-3.3-2.5-3.3h-1V5.5c0 1.5-1 2.5-2.5 2.5H6c-1.3 0-2.2.9-2.2 2.2v2.3C3.8 14 5 15 8.5 15z" fill="#f2d040"/><path d="M12 12l3 1.5-3 1.5" stroke="#333" stroke-width="0.7" fill="none"/></svg>
<svg class="ic" style="left:895px;top:66.5px;width:16px;height:16px" viewBox="0 0 16 16"><path d="M2.5 15L9.5 5" stroke="#e8c020" stroke-width="2.6" stroke-linecap="round"/><path d="M5 4.5c2-3 7-3.5 10.5-.5l-.7 1.2-2.8-.8-1.5 2-3-2z" fill="#888" stroke="#555" stroke-width="0.4"/></svg>
<svg class="ic" style="left:919px;top:66.5px;width:16px;height:16px" viewBox="0 0 16 16"><ellipse cx="8" cy="3" rx="2.6" ry="2.8" fill="#f0a818" stroke="#c06010" stroke-width="0.5"/><path d="M5 6h6l.8 5-1.3 5h-5l-1.3-5z" fill="#f2b020" stroke="#c05010" stroke-width="0.6"/><path d="M5.3 8h5.4M5.3 10h5.4M5.3 12h5.4M5.8 14h4.4" stroke="#c05010" stroke-width="0.7"/></svg>
<svg class="ic" style="left:955.5px;top:66.5px;width:16px;height:16px" viewBox="0 0 16 16"><rect x="1" y="0.5" width="14" height="15" fill="#5a8ac0" stroke="#2a3a50" stroke-width="0.6"/><rect x="1" y="0.5" width="3.5" height="15" fill="#2a3444"/><text x="7.2" y="11.5" font-size="9" fill="#fff" font-family="Liberation Serif">?</text></svg>
<svg class="ic" style="left:209px;top:80px;width:6px;height:4px" viewBox="0 0 6 4"><path d="M0 0h6l-3 3.5z" fill="#555"/></svg>
<svg class="ic" style="left:290.5px;top:73px;width:6px;height:4px" viewBox="0 0 6 4"><path d="M0 0h6l-3 3.5z" fill="#555"/></svg>
<svg class="ic" style="left:348.6px;top:73px;width:6px;height:4px" viewBox="0 0 6 4"><path d="M0 0h6l-3 3.5z" fill="#555"/></svg>
<div class="grip" style="left:5.6px;top:67px;height:12px"></div>
<div class="grip" style="left:188px;top:67px;height:12px"></div>
<div class="grip" style="left:534.5px;top:67px;height:12px"></div>
<div class="grip" style="left:776px;top:67px;height:12px"></div>
<div class="grip" style="left:861.75px;top:67px;height:12px"></div>
<div class="grip" style="left:946.6px;top:67px;height:12px"></div>
<div class="grip" style="left:983.5px;top:67px;height:12px"></div>
<div class="abs" style="left:590px;top:67px;width:1px;height:14px;border-left:1px dotted #c8c8c8"></div>
<div class="abs" style="left:644.4px;top:67px;width:1px;height:14px;border-left:1px dotted #c8c8c8"></div>
<svg class="ic" style="left:5.199999999999999px;top:108px;width:13px;height:13px" viewBox="0 0 16 16"><path d="M1 10c1-3 4-4 7-3l-2 4c-2 1-3 1-5-1z" fill="#e03a30"/><path d="M2 12c1.5 1 3.5 1 4.5-.5L5.5 10 2 10z" fill="#3a70c0"/><path d="M7 8L13 2" stroke="#e0b020" stroke-width="2.2" stroke-linecap="round"/><path d="M1 9l5 3" stroke="#f0d040" stroke-width="1.4"/></svg>
<svg class="ic" style="left:24.0px;top:108px;width:13px;height:13px" viewBox="0 0 16 16"><path d="M1.5 4h8v10h-8z" fill="#f0f0f0" stroke="#999" stroke-width="0.8"/><path d="M3.5 1.5h8v10" fill="none" stroke="#999" stroke-width="0.8"/><circle cx="12.5" cy="12.5" r="2.8" fill="#3a9a40"/><path d="M12.5 11v3M11 12.5h3" stroke="#fff" stroke-width="0.9"/></svg>
<svg class="ic" style="left:42.5px;top:108px;width:13px;height:13px" viewBox="0 0 16 16"><path d="M0.5 7c3-4.5 10-4.5 13 0-3 4.5-10 4.5-13 0z" fill="#d8dee6" stroke="#889" stroke-width="0.6"/><circle cx="7" cy="7" r="2.6" fill="#4a6a9a"/><path d="M11 13h4l-2 2z" fill="#444"/></svg>
<svg class="ic" style="left:61.5px;top:108px;width:13px;height:13px" viewBox="0 0 16 16"><path d="M1 1.5h12l-4.5 5.5v7l-3-2v-5z" fill="#4a8ad0"/><path d="M1 1.5h12v1.5H1z" fill="#f0d040"/><path d="M10 13h4l-2 2z" fill="#444"/></svg>
<svg class="ic" style="left:79.5px;top:108px;width:13px;height:13px" viewBox="0 0 16 16"><path d="M9.5 3.2C7.8 1.6 2.6 1.8 2.6 4.6C2.6 6.1 4.2 6.7 6.2 6.7C3.6 6.7 1.8 7.4 1.8 9.3C1.8 12.2 7.8 12.4 9.8 10.6" stroke="#8a3aa0" stroke-width="1.3" fill="none"/><rect x="8.5" y="9" width="5.5" height="6" fill="#b4b4b4" stroke="#888" stroke-width="0.5"/></svg>
<svg class="ic" style="left:107.1px;top:108px;width:13px;height:13px" viewBox="0 0 16 16"><rect x="1.5" y="2" width="7" height="12" fill="#f4f4f4" stroke="#aaa" stroke-width="0.6"/><circle cx="4" cy="6" r="1.3" fill="#f0a020"/><circle cx="4" cy="11" r="1.3" fill="#f0a020"/><path d="M11.5 1v12" stroke="#3a78c8" stroke-width="2.4"/><path d="M8 10.5l3.5 4.5 3.5-4.5z" fill="#3a78c8"/></svg>
<svg class="ic" style="left:125.5px;top:108px;width:13px;height:13px" viewBox="0 0 16 16"><rect x="1.5" y="2" width="7" height="12" fill="#f4f4f4" stroke="#aaa" stroke-width="0.6"/><circle cx="4" cy="6" r="1.3" fill="#f0a020"/><circle cx="4" cy="11" r="1.3" fill="#f0a020"/><path d="M11.5 15V4" stroke="#3a78c8" stroke-width="2.4"/><path d="M8 5.5l3.5-4.5 3.5 4.5z" fill="#3a78c8"/></svg>
<svg class="ic" style="left:143.5px;top:108px;width:13px;height:13px" viewBox="0 0 16 16"><rect x="1" y="1" width="10" height="11" fill="#f4f4f4" stroke="#999" stroke-width="0.8"/><circle cx="12" cy="12.5" r="2.6" fill="#e04040"/><path d="M10.8 12.5h2.4" stroke="#fff" stroke-width="0.8"/></svg>
<svg class="ic" style="left:96.2px;top:113px;width:6px;height:4px" viewBox="0 0 6 4"><path d="M0 0h6l-3 3.5z" fill="#555"/></svg>
<div class="abs" style="left:117px;top:134px;width:246px;height:333px;background:#fff;border:1px solid #cccccc;box-shadow:2px 2px 1.5px rgba(0,0,0,0.45)"></div>
<div class="abs" style="left:118px;top:134.7px;width:245px;height:16.8px;background:#0078d7"></div>
<div class="mt" style="left:138.6px;top:139.1px;color:#fff">Powiększ do warstw(y)</div>
<svg class="ic" style="left:122.5px;top:137.4px;width:13px;height:13px" viewBox="0 0 16 16"><rect x="1" y="2" width="5" height="9" fill="#eee" stroke="#aaa" stroke-width="0.6"/><circle cx="10" cy="6.5" r="5" fill="#e8eef4" stroke="#777" stroke-width="1.1"/><path d="M6.5 10 L1.5 15" stroke="#222" stroke-width="2.6" stroke-linecap="round"/><path d="M5.5 11 L1.8 14.7" stroke="#e8c020" stroke-width="1.8" stroke-linecap="round"/></svg>
<div class="mt" style="left:138.6px;top:156.1px;color:#a0a0a0">Powiększ do <u>z</u>aznaczonych</div>
<svg class="ic" style="left:122.5px;top:154.4px;width:13px;height:13px" viewBox="0 0 16 16"><g opacity="0.35"><rect x="1" y="2" width="5" height="9" fill="#eee" stroke="#aaa" stroke-width="0.6"/><circle cx="10" cy="6.5" r="5" fill="#eef2f6" stroke="#999" stroke-width="1.1"/><path d="M6.5 10 L1.5 15" stroke="#222" stroke-width="2.6" stroke-linecap="round"/><path d="M5.5 11 L1.8 14.7" stroke="#ddd" stroke-width="1.8" stroke-linecap="round"/></g></svg>
<div class="mt" style="left:138.6px;top:173.1px;color:#000">Pokaż w podglądzie</div>
<svg class="ic" style="left:122.5px;top:171.4px;width:13px;height:13px" viewBox="0 0 16 16"><rect x="1" y="3" width="5.6" height="4.6" rx="1.6" fill="none" stroke="#222" stroke-width="1.7"/><rect x="9.2" y="3" width="5.6" height="4.6" rx="1.6" fill="none" stroke="#222" stroke-width="1.7"/><path d="M6.6 4.6h2.6M0.5 3.5l-.3-1M15.5 3.5l.3-1" stroke="#222" stroke-width="1.3"/><circle cx="11.6" cy="13.4" r="2.8" fill="#5aaa5a"/><path d="M11.6 11.8v3.2M10 13.4h3.2" stroke="#fff" stroke-width="1"/></svg>
<div class="mt" style="left:138.6px;top:190.2px;color:#000">Pokaż liczbę obiektów</div>
<svg class="ic" style="left:122.5px;top:188.5px;width:13px;height:13px" viewBox="0 0 16 16"><rect x="1.5" y="3" width="12" height="12" fill="#fff" stroke="#aaa" stroke-width="0.8"/></svg>
<div class="mt" style="left:138.6px;top:207.2px;color:#000">Pokaż <u>e</u>tykiety</div>
<svg class="ic" style="left:122.5px;top:205.5px;width:13px;height:13px" viewBox="0 0 16 16"><path d="M0.5 8l2.5-3h12v6H3z" fill="#f0d440" stroke="#c0a020" stroke-width="0.5"/><text x="4.5" y="10.2" font-size="4" fill="#666" font-family="Liberation Sans">abc</text></svg>
<div class="mt" style="left:138.6px;top:224.2px;color:#000">Kopiuj warstwę</div>
<div class="mt" style="left:138.6px;top:241.2px;color:#000">Zmień <u>n</u>azwę warstwy</div>
<div class="mt" style="left:138.6px;top:259.2px;color:#000"><u>D</u>uplikuj warstwę</div>
<svg class="ic" style="left:122.5px;top:257.5px;width:13px;height:13px" viewBox="0 0 16 16"><rect x="1" y="2" width="11" height="11" fill="#e8e8e8" stroke="#999" stroke-width="0.8"/><path d="M1 13l1.5 1.5h10.5V4" fill="none" stroke="#888" stroke-width="0.8"/><rect x="9.5" y="10.5" width="5" height="4.5" fill="#e0c030"/></svg>
<div class="mt" style="left:138.6px;top:276.3px;color:#000"><u>U</u>suń warstwę...</div>
<svg class="ic" style="left:122.5px;top:274.6px;width:13px;height:13px" viewBox="0 0 16 16"><rect x="1" y="1.5" width="11" height="11" fill="#eee" stroke="#999" stroke-width="0.8"/><rect x="9" y="11" width="6" height="4" rx="1.5" fill="#e03030"/><path d="M10.5 13h3" stroke="#fff" stroke-width="0.8"/></svg>
<div class="mt" style="left:138.6px;top:295.4px;color:#000">Przenieś na dół</div>
<div class="mt" style="left:138.6px;top:313.8px;color:#000">Otwórz tabelę <u>a</u>trybutów</div>
<svg class="ic" style="left:122.5px;top:312.1px;width:13px;height:13px" viewBox="0 0 16 16"><rect x="1" y="1" width="13" height="13" fill="#c4d8ee" stroke="#a8c0e0" stroke-width="0.6"/><rect x="1" y="1" width="13" height="3" fill="#8ab0da"/><path d="M1 7h13M1 10.5h13M5.5 4v10M9.5 4v10" stroke="#e8f0f8" stroke-width="0.7"/></svg>
<div class="mt" style="left:138.6px;top:330.5px;color:#000"><u>F</u>iltruj...</div>
<div class="mt" style="left:138.6px;top:347.2px;color:#000">Zmień źródło danych...</div>
<div class="mt" style="left:138.6px;top:365.7px;color:#000"><u>U</u>staw zakres skalowy widoczności warstwy...</div>
<div class="mt" style="left:138.6px;top:382.9px;color:#000">Układ warstwy</div>
<svg class="ic" style="left:356px;top:384.4px;width:4px;height:7px" viewBox="0 0 4 7"><path d="M0.5 0.5L3.5 3.5L0.5 6.5z" fill="#444"/></svg>
<div class="mt" style="left:138.6px;top:401.5px;color:#000">E<u>k</u>sport</div>
<svg class="ic" style="left:356px;top:403.0px;width:4px;height:7px" viewBox="0 0 4 7"><path d="M0.5 0.5L3.5 3.5L0.5 6.5z" fill="#444"/></svg>
<div class="mt" style="left:138.6px;top:420.1px;color:#000">Style</div>
<svg class="ic" style="left:356px;top:421.6px;width:4px;height:7px" viewBox="0 0 4 7"><path d="M0.5 0.5L3.5 3.5L0.5 6.5z" fill="#444"/></svg>
<div class="mt" style="left:138.6px;top:437.2px;color:#000">Dodaj notatki warstwy...</div>
<div class="mt" style="left:138.6px;top:453.7px;color:#000"><u>W</u>łaściwości...</div>
<div class="abs" style="left:122px;top:253.9px;width:237px;height:1px;background:#d7d7d7"></div>
<div class="abs" style="left:122px;top:288.9px;width:237px;height:1px;background:#d7d7d7"></div>
<div class="abs" style="left:122px;top:307.7px;width:237px;height:1px;background:#d7d7d7"></div>
<div class="abs" style="left:122px;top:359.4px;width:237px;height:1px;background:#d7d7d7"></div>
<div class="abs" style="left:122px;top:396.1px;width:237px;height:1px;background:#d7d7d7"></div>
<div class="abs" style="left:122px;top:413.7px;width:237px;height:1px;background:#d7d7d7"></div>
</body></html>
